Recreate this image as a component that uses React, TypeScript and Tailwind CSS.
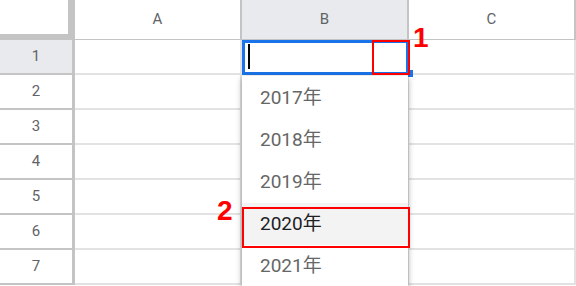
import React from "react";

const rows = [1, 2, 3, 4, 5, 6, 7];
const years = ["2017年", "2018年", "2019年", "2020年", "2021年"];

const App = () => {
  return (
    <div
      className="relative w-[576px] h-[286px] overflow-hidden bg-white"
      style={{ fontFamily: "Roboto, 'Noto Sans CJK JP', sans-serif" }}
    >
      {/* header row */}
      <div className="flex h-[40px]">
        <div className="w-[75px] h-[40px] border-r-[7px] border-b-[6px] border-[#c4c4c4] bg-white" />
        {["A", "B", "C"].map((c) => (
          <div
            key={c}
            className={`w-[167px] h-[40px] flex items-center justify-center border-r-2 border-b border-[#c4c4c4] text-[15px] text-[#5f6368] ${
              c === "B" ? "bg-[#e8eaed]" : "bg-white"
            }`}
          >
            {c}
          </div>
        ))}
      </div>

      {/* body rows */}
      {rows.map((r) => (
        <div key={r} className="flex h-[35px]">
          <div
            className={`w-[75px] h-[35px] flex items-center justify-center border-r-[3px] border-b-2 border-[#c4c4c4] text-[15px] text-[#5f6368] ${
              r === 1 ? "bg-[#e8eaed]" : "bg-white"
            }`}
          >
            {r}
          </div>
          {[0, 1, 2].map((c) => (
            <div
              key={c}
              className="w-[167px] h-[35px] border-r-2 border-b-2 border-[#e2e2e2] bg-white"
            />
          ))}
        </div>
      ))}

      {/* selected cell B1 */}
      <div className="absolute left-[242px] top-[40px] w-[167px] h-[35px] border-[3px] border-[#1a73e8]">
        <div className="absolute left-[3px] top-[1px] w-[1.5px] h-[25px] bg-black" />
      </div>
      <div className="absolute left-[408px] top-[70px] w-[5px] h-[7px] bg-[#1a73e8]" />

      {/* dropdown */}
      <div className="absolute left-[242px] top-[76px] w-[166px] h-[220px] bg-white pt-[1px] shadow-[0_2px_6px_rgba(0,0,0,0.35)]">
        {years.map((y) => (
          <div
            key={y}
            className={`h-[42px] flex items-center pl-[18px] text-[19px] ${
              y === "2020年" ? "bg-[#f3f3f3] text-[#202124]" : "text-[#666666]"
            }`}
          >
            {y}
          </div>
        ))}
      </div>

      {/* annotations */}
      <div className="absolute left-[372px] top-[40px] w-[38px] h-[35px] border-2 border-[#ff0000]" />
      <div className="absolute left-[242px] top-[207px] w-[168px] h-[41px] border-2 border-[#ff0000]" />
      <div
        className="absolute left-[413px] top-[24px] text-[28px] font-bold text-[#ff0000] leading-none"
        style={{ fontFamily: "'Liberation Sans', Arial, sans-serif" }}
      >
        1
      </div>
      <div
        className="absolute left-[217px] top-[197px] text-[28px] font-bold text-[#ff0000] leading-none"
        style={{ fontFamily: "'Liberation Sans', Arial, sans-serif" }}
      >
        2
      </div>
    </div>
  );
};

export default App;
